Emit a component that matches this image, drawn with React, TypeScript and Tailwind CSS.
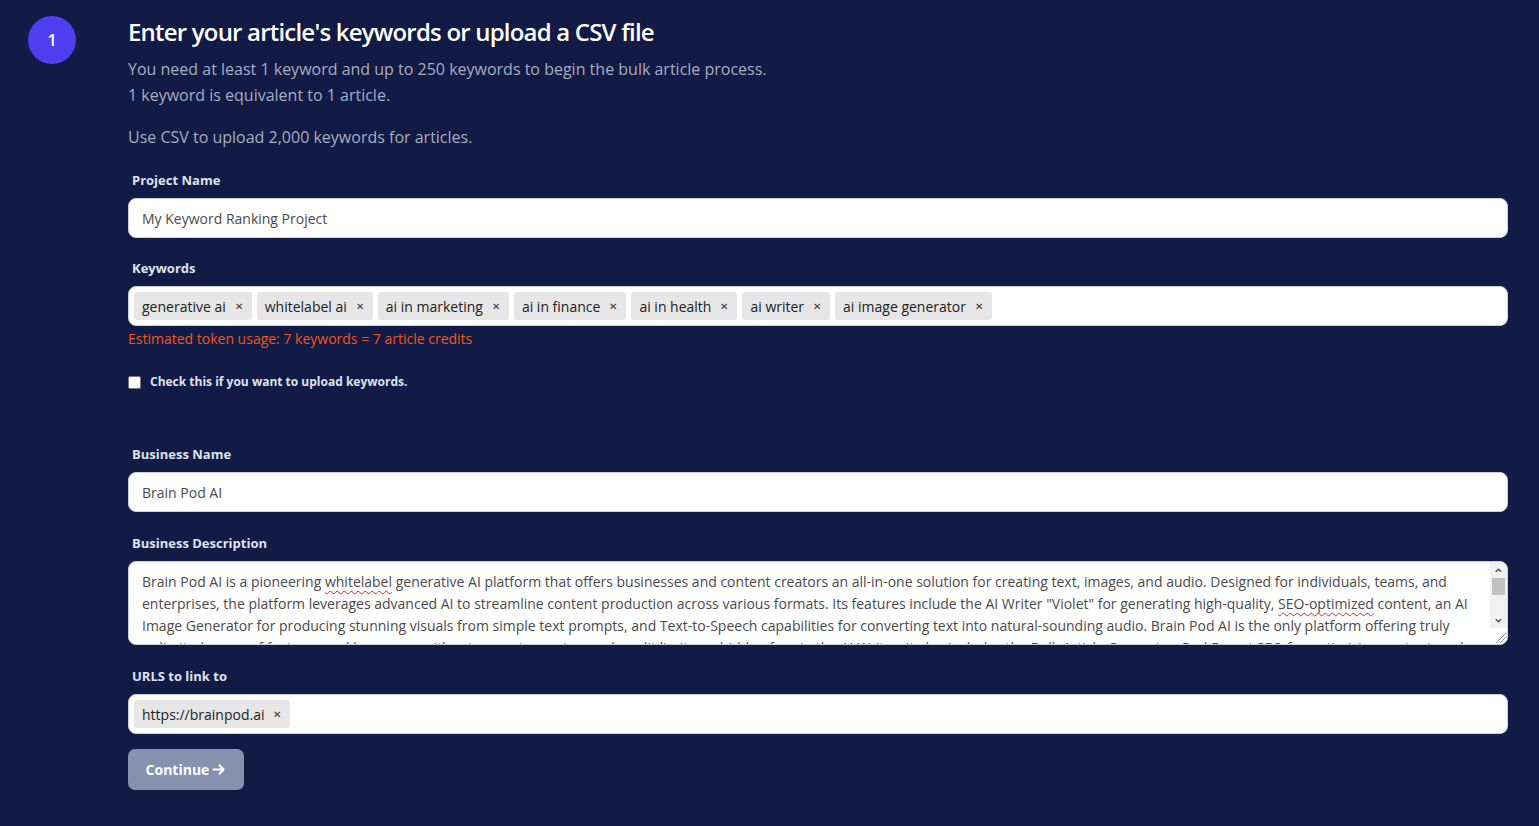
import { useState } from 'react'

const KEYWORDS = ['generative ai', 'whitelabel ai', 'ai in marketing', 'ai in finance', 'ai in health', 'ai writer', 'ai image generator']

function Label({ children }: { children: React.ReactNode }) {
  return <div className="mb-[9px] pl-1 text-[13px] font-bold leading-[18px] text-[#dfe3ee]">{children}</div>
}

function Tag({ text }: { text: string }) {
  return (
    <span className="flex h-[28px] items-center rounded-[3px] bg-[#e6e6e6] pl-[8px] pr-[9px] text-[14px] text-[#222]">
      {text}
      <span className="ml-[9px] text-[10px] text-[#333]">✕</span>
    </span>
  )
}

function TextInput({ value }: { value: string }) {
  return (
    <div className="flex h-[40px] items-center rounded-[8px] border border-[#c9cfdc] bg-white px-[13px] text-[14px] text-[#4a4a4a]">
      {value}
    </div>
  )
}

function TagInput({ tags }: { tags: string[] }) {
  return (
    <div className="flex h-[40px] items-center gap-[5px] rounded-[8px] border border-[#c9cfdc] bg-white px-[5px]">
      {tags.map(t => (
        <Tag key={t} text={t} />
      ))}
    </div>
  )
}

const squiggle = 'underline decoration-wavy decoration-[#d22] decoration-1 underline-offset-[3px]'

function FakeScrollbar() {
  return (
    <div className="flex w-[17px] shrink-0 flex-col bg-[#f1f1f1]">
      <div className="flex h-[16px] items-center justify-center">
        <svg viewBox="0 0 10 10" className="h-[9px] w-[9px]" fill="none" stroke="#505050" strokeWidth="1.6">
          <path d="M2 6.5 5 3.5 8 6.5" />
        </svg>
      </div>
      <div className="mx-[2px] h-[17px] bg-[#c1c1c1]" />
      <div className="flex-1" />
      <div className="flex h-[16px] items-center justify-center">
        <svg viewBox="0 0 10 10" className="h-[9px] w-[9px]" fill="none" stroke="#505050" strokeWidth="1.6">
          <path d="M2 3.5 5 6.5 8 3.5" />
        </svg>
      </div>
      <div className="flex h-[16px] items-end justify-end bg-white">
        <svg viewBox="0 0 14 14" className="h-[14px] w-[14px]" fill="none" stroke="#888" strokeWidth="1">
          <path d="M13 3 3 13M13 7 7 13M13 11 11 13" />
        </svg>
      </div>
    </div>
  )
}

export default function App() {
  const [checked, setChecked] = useState(false)

  return (
    <div className="min-h-[826px] bg-[#111b45] font-['Open_Sans',sans-serif]">
      <div className="flex pl-[28px] pr-[31px] pt-[16px]">
        {/* step bubble */}
        <div className="flex h-[48px] w-[48px] shrink-0 items-center justify-center rounded-full bg-[#4f3ff0] text-[16px] font-semibold text-white">
          1
        </div>

        <div className="ml-[52px] flex-1">
          <h1 className="text-[24px] font-semibold leading-[32px] tracking-[-0.8px] text-white">
            Enter your article's keywords or upload a CSV file
          </h1>
          <p className="mt-[8px] text-[16px] leading-[26px] text-[#a7adc2]">
            You need at least 1 keyword and up to 250 keywords to begin the bulk article process.
            <br />1 keyword is equivalent to 1 article.
          </p>
          <p className="mt-[16px] text-[16px] leading-[26px] text-[#a7adc2]">Use CSV to upload 2,000 keywords for articles.</p>

          <div className="mt-[21px]">
            <Label>Project Name</Label>
            <TextInput value="My Keyword Ranking Project" />
          </div>

          <div className="mt-[21px]">
            <Label>Keywords</Label>
            <TagInput tags={KEYWORDS} />
            <div className="mt-[3px] text-[14px] leading-[20px] text-[#f2561d]">
              Estimated token usage: 7 keywords = 7 article credits
            </div>
          </div>

          <label className="mt-[24px] flex items-center gap-[9px]">
            <input
              type="checkbox"
              checked={checked}
              onChange={e => setChecked(e.target.checked)}
              className="h-[13px] w-[13px] appearance-none rounded-[2px] border border-[#767676] bg-white"
            />
            <span className="text-[12px] font-bold text-[#dfe3ee]">Check this if you want to upload keywords.</span>
          </label>

          <div className="mt-[54px]">
            <Label>Business Name</Label>
            <TextInput value="Brain Pod AI" />
          </div>

          <div className="mt-[22px]">
            <Label>Business Description</Label>
            <div className="flex h-[84px] overflow-hidden rounded-[8px] border border-[#c9cfdc] bg-white">
              <div className="flex-1 overflow-hidden pl-[13px] pr-[10px] pt-[9px] text-[14px] leading-[22px] text-[#4a4a4a]">
                Brain Pod AI is a pioneering <span className={squiggle}>whitelabel</span> generative AI platform that offers
                businesses and content creators an all-in-one solution for creating text, images, and audio. Designed for
                individuals, teams, and enterprises, the platform leverages advanced AI to streamline content production
                across various formats. Its features include the AI Writer "Violet" for generating high-quality,{' '}
                <span className={squiggle}>SEO-optimized</span> content, an AI Image Generator for producing stunning visuals
                from simple text prompts, and Text-to-Speech capabilities for converting text into natural-sounding audio.
                Brain Pod AI is the only platform offering truly unlimited usage of features and languages without any
                extra costs, word credit limits, or hidden fees in the AI Writer. It also includes the Bulk Article
                Generator, Pod Expert SEO for optimizing content, and an API for seamless integration.
              </div>
              <FakeScrollbar />
            </div>
          </div>

          <div className="mt-[22px]">
            <Label>URLS to link to</Label>
            <TagInput tags={['https://brainpod.ai']} />
          </div>

          <button className="mt-[15px] flex h-[41px] w-[116px] items-center justify-center rounded-[7px] bg-[#8692ad] text-[14px] font-bold text-white">
            Continue
            <svg viewBox="0 0 16 16" className="ml-[2px] h-[15px] w-[15px]" fill="none" stroke="currentColor" strokeWidth="2" strokeLinecap="round" strokeLinejoin="round">
              <path d="M2.5 8h11M9 3.5 13.5 8 9 12.5" />
            </svg>
          </button>
        </div>
      </div>
    </div>
  )
}
